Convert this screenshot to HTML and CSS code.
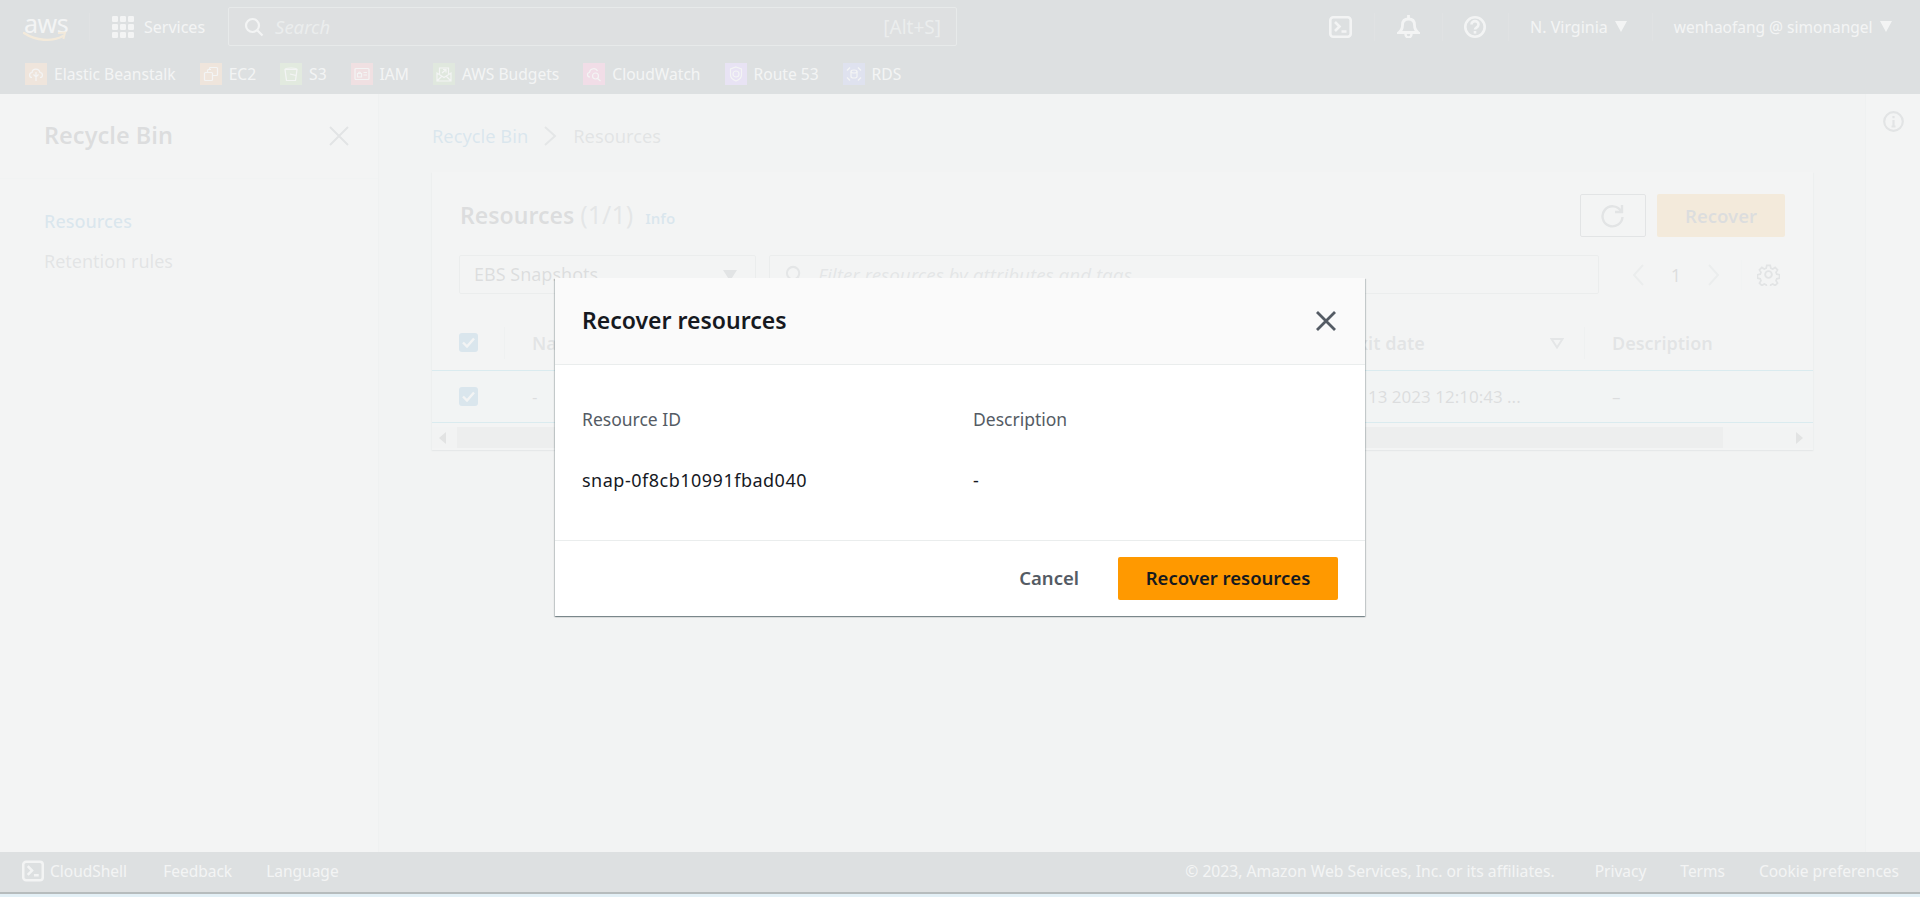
FILE: index.html
```html
<!DOCTYPE html>
<html lang="en">
<head>
    <meta charset="UTF-8">
    <meta name="viewport" content="width=device-width, initial-scale=1.0">
    <title>Recycle Bin - Resources</title>
    <link rel="stylesheet" href="styles.css">
</head>
<body>
    <div class="console">
        <header class="top-nav">
            <div class="nav-main">
                <a class="aws-logo">
                    <span class="aws-word">aws</span>
                    <svg class="aws-smile" width="44" height="12" viewBox="0 0 44 12" fill="none">
                        <path d="M1 2c12 8 28 9 39 3" stroke="#ff9900" stroke-width="2.4" stroke-linecap="round"/>
                        <path d="M35 2l7-.5-1.600 6.500" stroke="#ff9900" stroke-width="2" fill="none"/>
                    </svg>
                </a>
                <span class="nav-sep nav-sep-logo"></span>
                <svg class="grid-icon" width="22" height="22" viewBox="0 0 22 22" fill="#fff">
                    <rect x="0" y="0" width="6" height="6" rx="1.200"/><rect x="8" y="0" width="6" height="6" rx="1.200"/><rect x="16" y="0" width="6" height="6" rx="1.200"/>
                    <rect x="0" y="8" width="6" height="6" rx="1.200"/><rect x="8" y="8" width="6" height="6" rx="1.200"/><rect x="16" y="8" width="6" height="6" rx="1.200"/>
                    <rect x="0" y="16" width="6" height="6" rx="1.200"/><rect x="8" y="16" width="6" height="6" rx="1.200"/><rect x="16" y="16" width="6" height="6" rx="1.200"/>
                </svg>
                <span class="services-label">Services</span>
                <div class="global-search">
                    <svg width="20" height="20" viewBox="0 0 20 20" fill="none" stroke="#fff" stroke-width="2.200">
                        <circle cx="8.500" cy="8.500" r="6.500"/><path d="M13.500 13.500l5 5"/>
                    </svg>
                    <span class="search-placeholder">Search</span>
                    <span class="search-hint">[Alt+S]</span>
                </div>
                <div class="nav-tools">
                    <svg class="tool-icon" width="23" height="22" viewBox="0 0 23 22" fill="none" stroke="#fff" stroke-width="2.600">
                        <rect x="1.300" y="1.300" width="20.400" height="19.400" rx="3"/>
                        <path d="M6 6l4.500 4.500L6 15M12.500 15.500h5"/>
                    </svg>
                    <span class="nav-sep nav-sep-a"></span>
                    <svg class="tool-icon" width="23" height="23" viewBox="0 0 23 23" fill="none" stroke="#fff" stroke-width="2.800">
                        <path d="M2 17.500c2.500-2 3.500-3.500 3.500-7.500 0-4 2.500-6 6-6s6 2 6 6c0 4 1 5.500 3.500 7.500z"/>
                        <path d="M11.500 0v3.500"/>
                        <path d="M8.500 19c0 4.500 6 4.500 6 0" stroke-width="2.400"/>
                    </svg>
                    <span class="nav-sep nav-sep-b"></span>
                    <svg class="tool-icon" width="22" height="22" viewBox="0 0 22 22" fill="none" stroke="#fff" stroke-width="2.600">
                        <circle cx="11" cy="11" r="9.700"/>
                        <path d="M7.500 8.500c0-4.500 7-4.500 7 0 0 3-3.500 3-3.500 5"/>
                        <path d="M11 15v2.600"/>
                    </svg>
                    <span class="nav-sep nav-sep-c"></span>
                    <span class="nav-menu nav-region">N. Virginia</span>
                    <span class="nav-caret"></span>
                    <span class="nav-sep nav-sep-d"></span>
                    <span class="nav-menu nav-account">wenhaofang @ simonangel</span>
                    <span class="nav-caret"></span>
                </div>
            </div>
            <div class="favorites">
                <a class="fav"><span class="fav-icon fav-orange"><svg width="16" height="16" viewBox="0 0 16 16" fill="none" stroke="#fff" stroke-width="1.200"><path d="M4 11.500C1 11.500.5 7 4 6.500 4.500 2 11 2 12 6.500c3.500.5 3 5 0 5M8 15V6M5.500 8.500L8 11l2.500-2.500"/></svg></span>Elastic Beanstalk</a>
                <a class="fav"><span class="fav-icon fav-orange"><svg width="16" height="16" viewBox="0 0 16 16" fill="none" stroke="#fff" stroke-width="1.200"><rect x="1.500" y="6.500" width="8" height="8" rx="1"/><path d="M4.500 6V4.500a1 1 0 0 1 1-1H8M6.500 3V2.500a1 1 0 0 1 1-1h6a1 1 0 0 1 1 1v6a1 1 0 0 1-1 1H10"/></svg></span>EC2</a>
                <a class="fav"><span class="fav-icon fav-green"><svg width="16" height="16" viewBox="0 0 16 16" fill="none" stroke="#fff" stroke-width="1.200"><path d="M2 3.500h12L12.500 14.500h-9zM2 3.500c0-2 12-2 12 0M7 8l6 1.500"/></svg></span>S3</a>
                <a class="fav"><span class="fav-icon fav-red"><svg width="16" height="16" viewBox="0 0 16 16" fill="none" stroke="#fff" stroke-width="1.200"><rect x="1" y="2.500" width="14" height="11" rx="1"/><path d="M3.500 7.500h4v3.500h-4zM4.500 7.500c0-2 2-2 2 0M9.500 6.500h3.500M9.500 9h3.500"/></svg></span>IAM</a>
                <a class="fav"><span class="fav-icon fav-lime"><svg width="16" height="16" viewBox="0 0 16 16" fill="none" stroke="#fff" stroke-width="1.200"><path d="M1 7v8h14V7L8 11.500zM1 15l5-5M15 15l-5-5M3.500 8.500V2h9v6.500M6 7l4-3.500M7 3.500h3V6.500"/></svg></span>AWS Budgets</a>
                <a class="fav"><span class="fav-icon fav-pink"><svg width="16" height="16" viewBox="0 0 16 16" fill="none" stroke="#fff" stroke-width="1.200"><path d="M4 11C1 11 .5 7 3.500 6.500 4 2 10 1.500 11.500 5"/><circle cx="9.500" cy="10" r="3"/><path d="M11.500 12.500l3 2.500"/></svg></span>CloudWatch</a>
                <a class="fav"><span class="fav-icon fav-purple"><svg width="16" height="16" viewBox="0 0 16 16" fill="none" stroke="#fff" stroke-width="1.200"><path d="M8 1l5.500 2v6c0 3-3 5-5.500 6-2.500-1-5.500-3-5.500-6V3z"/><circle cx="8" cy="8" r="3"/></svg></span>Route 53</a>
                <a class="fav"><span class="fav-icon fav-blue"><svg width="16" height="16" viewBox="0 0 16 16" fill="none" stroke="#fff" stroke-width="1.200"><ellipse cx="8" cy="5.500" rx="3" ry="1.500"/><path d="M5 5.500v5c0 2 6 2 6 0v-5M1 4.500L4 1.500M15 4.500l-3-3M1 11.500l3 3M15 11.500l-3 3"/></svg></span>RDS</a>
            </div>
        </header>

        <main class="layout">
            <aside class="side-nav">
                <div class="side-head">
                    <h2 class="side-title">Recycle Bin</h2>
                    <svg width="20" height="20" viewBox="0 0 20 20" fill="none" stroke="#545b64" stroke-width="2"><path d="M1 1l18 18M19 1L1 19"/></svg>
                </div>
                <ul class="side-links">
                    <li class="side-active">Resources</li>
                    <li>Retention rules</li>
                </ul>
            </aside>

            <section class="content">
                <div class="breadcrumb">
                    <a>Recycle Bin</a>
                    <svg width="15" height="20" viewBox="0 0 15 20" fill="none" stroke="#687078" stroke-width="2"><path d="M2 1l10 9-10 9"/></svg>
                    <span>Resources</span>
                </div>
                <div class="panel">
                    <div class="panel-head">
                        <h1 class="panel-title">Resources <span class="panel-count">(1/1)</span></h1>
                        <a class="info-link">Info</a>
                        <button class="icon-btn">
                            <svg width="24" height="24" viewBox="0 0 24 24" fill="none" stroke="#545b64" stroke-width="2.400"><path d="M20 7a10 10 0 1 0 1.500 6"/><path d="M21 1v7h-7"/></svg>
                        </button>
                        <button class="recover-btn">Recover</button>
                    </div>
                    <div class="filter-row">
                        <div class="type-select">EBS Snapshots<span class="select-caret"></span></div>
                        <div class="filter-input">
                            <svg width="19" height="19" viewBox="0 0 20 20" fill="none" stroke="#687078" stroke-width="2.200"><circle cx="8.500" cy="8.500" r="6.500"/><path d="M13.500 13.500l5 5"/></svg>
                            <span>Filter resources by attributes and tags</span>
                        </div>
                        <div class="pager">
                            <svg width="13" height="22" viewBox="0 0 13 22" fill="none" stroke="#aab7b8" stroke-width="2"><path d="M11 1L2 11l9 10"/></svg>
                            <span class="pager-num">1</span>
                            <svg width="13" height="22" viewBox="0 0 13 22" fill="none" stroke="#aab7b8" stroke-width="2"><path d="M2 1l9 10-9 10"/></svg>
                            <span class="pager-sep"></span>
                            <svg width="23" height="23" viewBox="0 0 24 24" fill="none" stroke="#545b64" stroke-width="2"><circle cx="12" cy="12" r="3.500"/><path d="M10 1.500h4l.7 3.200 2.200.9 2.800-1.800 2.800 2.800-1.800 2.800.9 2.200 3.200.7v4l-3.200.7-.9 2.200 1.800 2.800-2.800 2.800-2.800-1.800-2.200.9-.7 3.200h-4l-.7-3.200-2.200-.9-2.800 1.800-2.800-2.800 1.800-2.800-.9-2.200-3.200-.7v-4l3.200-.7.9-2.200-1.800-2.800 2.800-2.800 2.800 1.800 2.200-.9z" transform="translate(1.200 1.200) scale(.9)"/></svg>
                        </div>
                    </div>
                    <div class="table">
                        <div class="table-row table-head">
                            <div class="cell cell-check"><span class="checkbox"><svg width="13" height="11" viewBox="0 0 13 11" fill="none" stroke="#fff" stroke-width="2.400"><path d="M1 5.500l4 4 7-8"/></svg></span></div>
                            <div class="cell cell-name">Name</div>
                            <div class="cell cell-date">Exit date
                                <svg class="sort-caret" width="14" height="11" viewBox="0 0 14 11" fill="none" stroke="#687078" stroke-width="2"><path d="M1.500 1h11L7 9.500z"/></svg>
                            </div>
                            <div class="cell cell-last">Description</div>
                        </div>
                        <div class="table-row table-selected">
                            <div class="cell cell-check"><span class="checkbox"><svg width="13" height="11" viewBox="0 0 13 11" fill="none" stroke="#fff" stroke-width="2.400"><path d="M1 5.500l4 4 7-8"/></svg></span></div>
                            <div class="cell">-</div>
                            <div class="cell cell-date">Oct 13 2023 12:10:43 ...</div>
                            <div class="cell cell-last">–</div>
                        </div>
                        <div class="scrollbar">
                            <span class="scroll-left"></span>
                            <span class="scroll-thumb"></span>
                            <span class="scroll-right"></span>
                        </div>
                    </div>
                </div>
            </section>

            <aside class="tools-rail">
                <svg width="21" height="21" viewBox="0 0 21 21" fill="none" stroke="#545b64" stroke-width="2.200"><circle cx="10.500" cy="10.500" r="9.300"/><path d="M10.500 9v6.500M10.500 5v2.200M8.500 15.500h4"/></svg>
            </aside>
        </main>

        <footer class="console-footer">
            <svg width="22" height="22" viewBox="0 0 23 22" fill="none" stroke="#fff" stroke-width="2.600">
                <rect x="1.300" y="1.300" width="20.400" height="19.400" rx="3"/>
                <path d="M6 6l4.500 4.500L6 15M12.500 15.500h5"/>
            </svg>
            <a class="foot-shell">CloudShell</a>
            <a class="foot-link">Feedback</a>
            <a class="foot-link">Language</a>
            <span class="foot-copy">© 2023, Amazon Web Services, Inc. or its affiliates.</span>
            <a class="foot-right foot-privacy">Privacy</a>
            <a class="foot-right">Terms</a>
            <a class="foot-right">Cookie preferences</a>
        </footer>

        <div class="overlay">
            <div class="modal">
                <div class="modal-head">
                    <h2 class="modal-title">Recover resources</h2>
                    <svg width="20" height="20" viewBox="0 0 20 20" fill="none" stroke="#545b64" stroke-width="2.800"><path d="M1 1l18 18M19 1L1 19"/></svg>
                </div>
                <div class="modal-body">
                    <div class="modal-col">
                        <div class="modal-label">Resource ID</div>
                        <div class="modal-value">snap-0f8cb10991fbad040</div>
                    </div>
                    <div class="modal-col">
                        <div class="modal-label">Description</div>
                        <div class="modal-value">-</div>
                    </div>
                </div>
                <div class="modal-foot">
                    <button class="cancel-btn">Cancel</button>
                    <button class="confirm-btn">Recover resources</button>
                </div>
            </div>
        </div>
    </div>
    <div class="desktop-strip"></div>
</body>
</html>
```

FILE: styles.css
```css
* {
    box-sizing: border-box;
}
html, body {
    height: 100%;
}
body {
    margin: 0;
    font-family: "Noto Sans", "Open Sans", sans-serif;
    font-size: 18px;
    color: #16191f;
    background-color: #e3f0f6;
    overflow: hidden;
}
h1, h2 {
    margin: 0;
}
ul {
    margin: 0;
    padding: 0;
    list-style: none;
}
button {
    font-family: inherit;
}
.console {
    position: relative;
    height: 894px;
    display: flex;
    flex-direction: column;
    background-color: #f2f3f3;
    border-bottom: 2px solid #b6bcbd;
}
.desktop-strip {
    height: 3px;
    background-color: #e3f0f6;
}

/* top navigation */
.top-nav {
    height: 94px;
    background-color: #1e3540;
    color: #fff;
    flex-shrink: 0;
}
.nav-main {
    height: 53px;
    display: flex;
    align-items: center;
    padding-left: 24px;
}
.aws-logo {
    position: relative;
    width: 44px;
    height: 28px;
    display: block;
    margin-top: 1px;
}
.aws-word {
    display: block;
    font-size: 25px;
    line-height: 20px;
    letter-spacing: -0.5px;
}
.aws-smile {
    position: absolute;
    left: -1px;
    top: 18px;
}
.nav-sep {
    width: 1px;
    height: 28px;
    background-color: #414750;
}
.nav-sep-logo {
    margin-left: 21px;
}
.grid-icon {
    margin-left: 22px;
}
.services-label {
    margin-left: 10px;
    font-size: 16px;
}
.global-search {
    width: 729px;
    height: 39px;
    margin-left: 23px;
    display: flex;
    align-items: center;
    padding: 0 15px 0 15px;
    border: 1px solid #879596;
    border-radius: 2px;
    background-color: #2a3440;
}
.search-placeholder {
    margin-left: 11px;
    font-size: 18.500px;
    font-style: italic;
    color: #aab7b8;
}
.search-hint {
    margin-left: auto;
    font-size: 19px;
    color: #aab7b8;
}
.nav-tools {
    display: flex;
    align-items: center;
    margin-left: 372px;
}
.nav-sep-a {
    margin: 0 22px;
}
.nav-sep-b {
    margin: 0 21px 0 22px;
}
.nav-sep-c {
    margin: 0 21px 0 22px;
}
.nav-sep-d {
    margin: 0 21px 0 25px;
}
.nav-menu {
    font-size: 16px;
}
.nav-account {
    font-size: 15.500px;
}
.nav-caret {
    width: 0;
    height: 0;
    margin-left: 7px;
    border-left: 6.500px solid transparent;
    border-right: 6.500px solid transparent;
    border-top: 11px solid #fff;
}
.favorites {
    display: flex;
    align-items: center;
    gap: 24px;
    height: 41px;
    padding: 0 0 0 25px;
}
.fav {
    display: flex;
    align-items: center;
    gap: 7px;
    font-size: 15.600px;
}
.fav-icon {
    width: 22px;
    height: 22px;
    display: flex;
    align-items: center;
    justify-content: center;
}
.fav-orange {
    background-color: #d86613;
}
.fav-green {
    background-color: #569a31;
}
.fav-red {
    background-color: #dd344c;
}
.fav-lime {
    background-color: #3f8624;
}
.fav-pink {
    background-color: #e7157b;
}
.fav-purple {
    background-color: #8c4fff;
}
.fav-blue {
    background-color: #3b48cc;
}

/* page */
.layout {
    flex: 1;
    display: flex;
    min-height: 0;
}
.side-nav {
    width: 379px;
    border-right: 1px solid #d5dbdb;
    background-color: #fff;
    flex-shrink: 0;
}
.side-head {
    height: 85px;
    display: flex;
    align-items: center;
    justify-content: space-between;
    padding: 0 29px 0 44px;
    border-bottom: 1px solid #eaeded;
}
.side-title {
    font-size: 23.500px;
    font-weight: 600;
    color: #16191f;
    margin-top: -2px;
}
.side-links {
    padding-top: 23px;
    color: #545b64;
}
.side-links li {
    height: 40px;
    line-height: 39px;
    padding-left: 44px;
}
.side-active {
    color: #0073bb;
    font-weight: 500;
}
.content {
    flex: 1;
    padding: 0 52px 0 53px;
}
.breadcrumb {
    height: 78px;
    padding-top: 5px;
    display: flex;
    align-items: center;
    gap: 15px;
    color: #545b64;
    font-size: 18.300px;
}
.breadcrumb a {
    color: #0073bb;
}
.panel {
    background-color: #fff;
    box-shadow: 0 1px 1px 0 rgba(0, 28, 36, 0.3), 1px 1px 1px 0 rgba(0, 28, 36, 0.15), -1px 1px 1px 0 rgba(0, 28, 36, 0.15);
}
.panel-head {
    display: flex;
    align-items: center;
    height: 83px;
    padding: 4px 28px 0 28px;
}
.panel-title {
    font-size: 23px;
    font-weight: 600;
    color: #16191f;
    margin-top: -3px;
}
.panel-count {
    font-size: 25px;
    font-weight: 400;
    color: #687078;
}
.info-link {
    margin-left: 12px;
    margin-top: 4px;
    font-size: 15px;
    font-weight: 600;
    color: #0073bb;
}
.icon-btn {
    margin-left: auto;
    width: 66px;
    height: 43px;
    display: flex;
    align-items: center;
    justify-content: center;
    padding: 0;
    background-color: #fff;
    border: 1px solid #545b64;
    border-radius: 2px;
}
.recover-btn {
    width: 128px;
    height: 43px;
    margin-left: 11px;
    border: none;
    border-radius: 2px;
    background-color: #ff9900;
    color: #16191f;
    font-size: 18.500px;
    font-weight: 600;
}
.filter-row {
    display: flex;
    align-items: center;
    height: 39px;
    padding-left: 27px;
}
.type-select {
    position: relative;
    width: 297px;
    height: 39px;
    line-height: 37px;
    padding-left: 14px;
    border: 1px solid #aab7b8;
    border-radius: 2px;
    color: #16191f;
}
.select-caret {
    position: absolute;
    right: 18px;
    top: 14px;
    border-left: 7px solid transparent;
    border-right: 7px solid transparent;
    border-top: 11px solid #545b64;
}
.filter-input {
    width: 830px;
    height: 39px;
    margin-left: 13px;
    display: flex;
    align-items: center;
    gap: 14px;
    padding-left: 15px;
    border: 1px solid #aab7b8;
    border-radius: 2px;
    font-size: 18.800px;
    font-style: italic;
    color: #687078;
}
.pager {
    display: flex;
    align-items: center;
    margin-left: 33px;
}
.pager-num {
    width: 62px;
    text-align: center;
    color: #16191f;
}
.pager-sep {
    width: 1px;
    height: 30px;
    margin: 0 15px 0 21px;
    background-color: #eaeded;
}
.table {
    margin-top: 25px;
    padding-bottom: 2px;
}
.table-row {
    display: grid;
    grid-template-columns: 72px 1fr 272px 229px;
    align-items: center;
}
.table-head {
    height: 51px;
    padding-bottom: 4px;
    font-weight: 600;
    color: #545b64;
}
.table-selected {
    height: 53px;
    border-top: 1px solid #00a1c9;
    border-bottom: 1px solid #00a1c9;
    background-color: #f1faff;
    color: #16191f;
    font-size: 17px;
}
.cell {
    position: relative;
    padding-left: 28px;
    white-space: nowrap;
    overflow: hidden;
}
.cell-check {
    padding-left: 27px;
    display: flex;
}
.table-head .cell-date {
    padding-left: 36px;
}
.table-selected .cell-date {
    padding-left: 24px;
}
.table-head .cell {
    line-height: 32px;
}
.table-head .cell-check {
    align-items: center;
    height: 32px;
}
.table-head .cell-last, .table-head .cell-name {
    box-shadow: inset 1px 0 0 #d5dbdb;
}
.checkbox {
    width: 19px;
    height: 19px;
    display: flex;
    align-items: center;
    justify-content: center;
    border-radius: 3px;
    background-color: #0073bb;
}
.sort-caret {
    position: absolute;
    right: 20px;
    top: 11px;
}
.scrollbar {
    height: 21px;
    margin-top: 4px;
    display: flex;
    align-items: center;
    background-color: #f1f1f1;
    position: relative;
}
.scroll-left {
    margin-left: 7px;
    border-top: 6px solid transparent;
    border-bottom: 6px solid transparent;
    border-right: 7px solid #505050;
}
.scroll-thumb {
    width: 1266px;
    height: 21px;
    margin-left: 11px;
    background-color: #c1c1c1;
}
.scroll-right {
    margin-left: 73px;
    border-top: 6px solid transparent;
    border-bottom: 6px solid transparent;
    border-left: 7px solid #505050;
}
.tools-rail {
    width: 55px;
    padding: 17px 0 0 17px;
    border-left: 1px solid #d5dbdb;
    background-color: #fff;
    flex-shrink: 0;
}

/* footer */
.console-footer {
    height: 40px;
    display: flex;
    align-items: center;
    padding: 0 21px 2px 22px;
    background-color: #1e3540;
    color: #fff;
    font-size: 15.500px;
    flex-shrink: 0;
}
.foot-shell {
    margin-left: 6px;
    margin-right: 2px;
}
.foot-link {
    margin-left: 34px;
}
.foot-copy {
    margin-left: auto;
    font-size: 15.700px;
}
.foot-right {
    margin-left: 34px;
}
.foot-privacy {
    margin-left: 40px;
}

/* modal over dimmed page */
.overlay {
    position: absolute;
    top: 0;
    left: 0;
    right: 0;
    bottom: 0;
    display: flex;
    justify-content: center;
    padding-top: 278px;
    background-color: rgba(242, 243, 243, 0.9);
}
.modal {
    width: 810px;
    height: 338px;
    background-color: #fff;
    box-shadow: 0 1px 1px 0 rgba(0, 28, 36, 0.3), 1px 1px 1px 0 rgba(0, 28, 36, 0.15), -1px 1px 1px 0 rgba(0, 28, 36, 0.15);
}
.modal-head {
    height: 87px;
    display: flex;
    align-items: center;
    justify-content: space-between;
    padding: 0 29px 0 27px;
    background-color: #fafafa;
    border-bottom: 1px solid #eaeded;
}
.modal-title {
    font-size: 23px;
    font-weight: 600;
    margin-top: -3px;
}
.modal-body {
    height: 175px;
    display: flex;
    padding: 42px 27px 0;
}
.modal-col {
    width: 391px;
    flex-shrink: 0;
}
.modal-label {
    height: 61px;
    line-height: 24px;
    font-size: 17.500px;
    color: #545b64;
}
.modal-value {
    line-height: 24px;
    letter-spacing: 0.5px;
}
.modal-foot {
    height: 76px;
    display: flex;
    align-items: center;
    justify-content: flex-end;
    padding: 0 27px 0 0;
    border-top: 1px solid #eaeded;
}
.cancel-btn {
    height: 43px;
    margin-right: 39px;
    padding: 0 0 2px;
    border: none;
    background: transparent;
    color: #545b64;
    font-size: 18.500px;
    font-weight: 600;
}
.confirm-btn {
    width: 220px;
    height: 43px;
    padding: 0 0 2px;
    border: none;
    border-radius: 2px;
    background-color: #ff9900;
    color: #16191f;
    font-size: 18.500px;
    font-weight: 600;
}
```
